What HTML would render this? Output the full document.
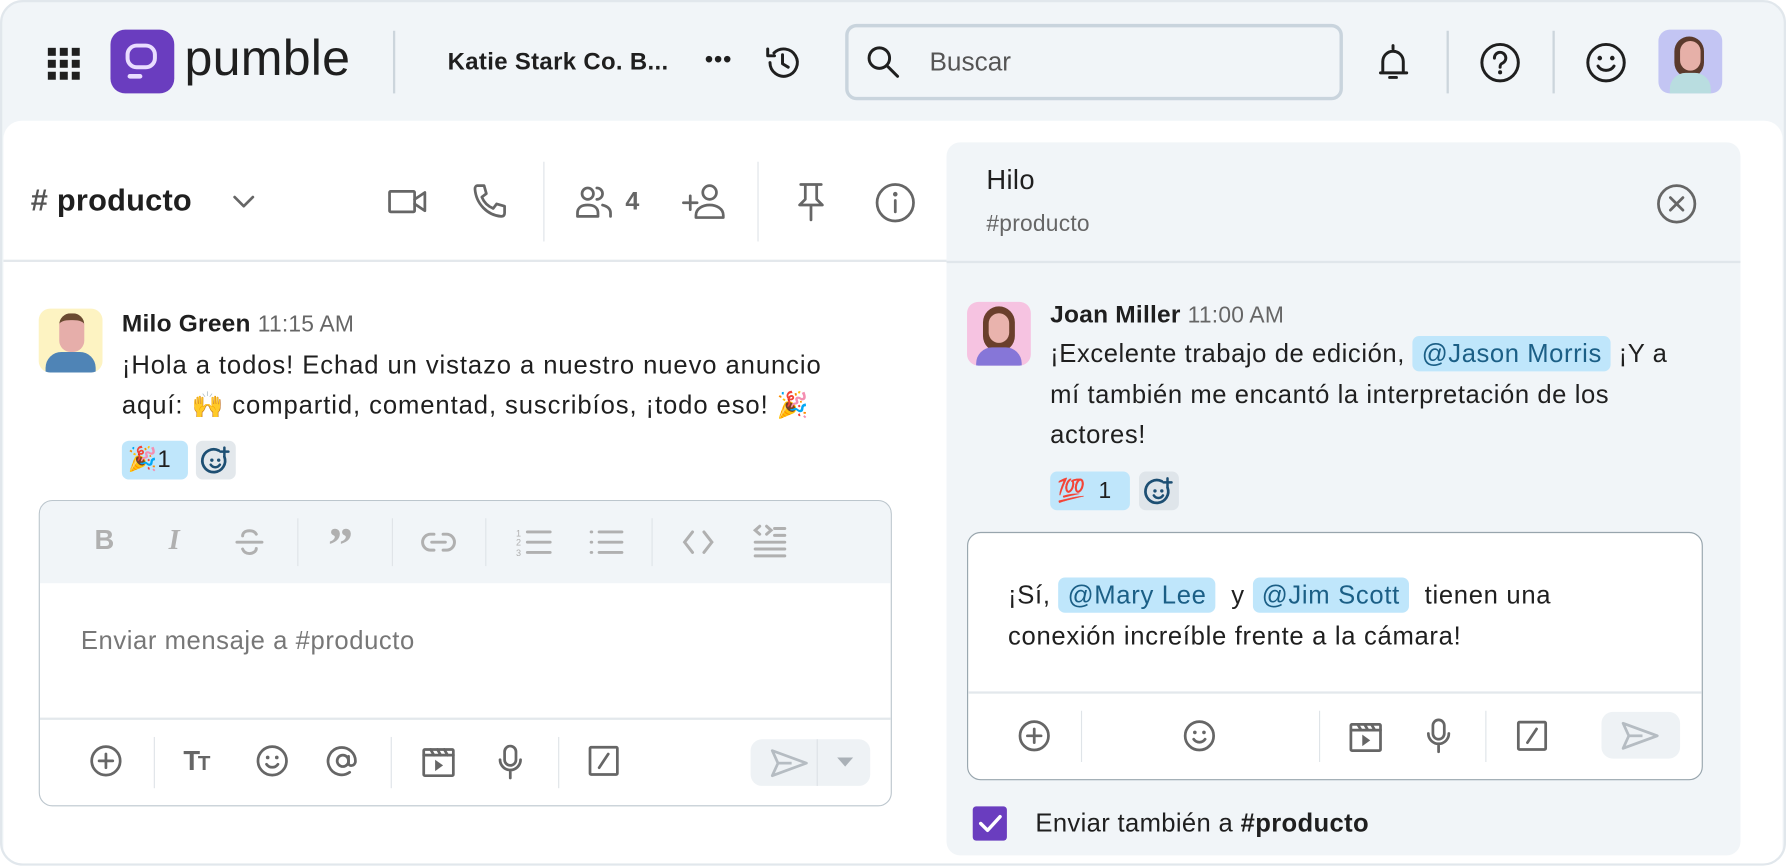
<!DOCTYPE html>
<html><head><meta charset="utf-8"><style>
*{box-sizing:border-box;margin:0;padding:0}
body{width:1786px;height:866px;overflow:hidden;background:#fff;font-family:"Liberation Sans","Noto Sans CJK JP",sans-serif;color:#1f1f1f}
#w{position:absolute;left:0;top:0;width:1568px;height:760px;transform:scale(1.13903);transform-origin:0 0;background:#f1f5f8;border:2px solid #e1e7ec;border-radius:20px;overflow:hidden}
.a{position:absolute;white-space:nowrap}
svg{position:absolute;overflow:visible}
.g{stroke:#666;fill:none;stroke-width:2.4;stroke-linecap:round;stroke-linejoin:round}
.k{stroke:#1f1f1f;fill:none;stroke-width:2.6;stroke-linecap:round;stroke-linejoin:round}
.t{stroke:#b0b0b0;fill:none;stroke-width:2.6;stroke-linecap:round}
.vd{position:absolute;width:1px;background:#dfe4e8}
.m{background:#bfe6fb;color:#1b5f86;border-radius:6px;padding:3px 8px}
.tx{font-size:22.5px;letter-spacing:0.8px}
</style></head><body><div id="w">
<svg style="left:40px;top:40px" width="28" height="28"><g fill="#1f1f1f"><rect x="0" y="0" width="7" height="7"/><rect x="10.5" y="0" width="7" height="7"/><rect x="21" y="0" width="7" height="7"/><rect x="0" y="10.5" width="7" height="7"/><rect x="10.5" y="10.5" width="7" height="7"/><rect x="21" y="10.5" width="7" height="7"/><rect x="0" y="21" width="7" height="7"/><rect x="10.5" y="21" width="7" height="7"/><rect x="21" y="21" width="7" height="7"/></g></svg>
<div class="a" style="left:95px;top:24px;width:56px;height:56px;background:#6a3dbf;border-radius:13px"></div>
<svg style="left:95px;top:24px" width="56" height="56"><rect x="15" y="14" width="24" height="19" rx="8" fill="none" stroke="#e9ddff" stroke-width="3.5"/><rect x="15" y="39" width="13" height="4" rx="2" fill="#e9ddff"/></svg>
<div class="a" style="left:160px;top:24px;font-size:44px;font-weight:500;letter-spacing:0.2px;line-height:52px">pumble</div>
<div class="a" style="left:343px;top:25px;width:2px;height:55px;background:#ccd5dc"></div>
<div class="a" style="left:391px;top:40px;font-size:21px;font-weight:700;line-height:26px;letter-spacing:0.3px">Katie Stark Co. B...</div>
<div class="a" style="left:617px;top:40px;font-size:20px;font-weight:700;letter-spacing:1px">•••</div>
<svg style="left:668px;top:36px" width="34" height="34"><path class="k" d="M6 17a12 12 0 1 0 3.5-8.5M4 5v6h6M17 10v8l5 3"/></svg>
<div class="a" style="left:740px;top:19px;width:437px;height:67px;border:3px solid #c9d4dd;border-radius:10px"></div>
<svg style="left:758px;top:37px" width="32" height="32"><circle class="k" cx="12" cy="12" r="9" stroke-width="3"/><path class="k" d="M19 19l9 9" stroke-width="3.4"/></svg>
<div class="a" style="left:814px;top:39px;font-size:23px;color:#555">Buscar</div>
<svg style="left:1207px;top:35px" width="28" height="36"><path class="k" d="M14 3v3M5 27V17a9 9 0 0 1 18 0v10H3M26 27h-3M11 31h6"/></svg>
<div class="a" style="left:1268px;top:25px;width:2px;height:55px;background:#ccd5dc"></div>
<svg style="left:1297px;top:35px" width="36" height="36"><circle class="k" cx="18" cy="18" r="16"/><path class="k" d="M13 14a5 5 0 1 1 7 4.5c-1.5.7-2 1.5-2 3.5"/><circle cx="18" cy="26.5" r="1.8" fill="#1f1f1f"/></svg>
<div class="a" style="left:1361px;top:25px;width:2px;height:55px;background:#ccd5dc"></div>
<svg style="left:1390px;top:35px" width="37" height="37"><circle class="k" cx="18" cy="18" r="16"/><circle cx="12.5" cy="14" r="2" fill="#1f1f1f"/><circle cx="23.5" cy="14" r="2" fill="#1f1f1f"/><path class="k" d="M11 21c3 5 11 5 14 0"/></svg>
<div class="a" style="left:1454px;top:24px;width:56px;height:56px;background:#c3c5f3;border-radius:10px;overflow:hidden"><div class="a" style="left:14px;top:6px;width:26px;height:36px;background:#5a3a2c;border-radius:13px"></div><div class="a" style="left:19px;top:10px;width:18px;height:26px;background:#e6b0a8;border-radius:9px"></div><div class="a" style="left:10px;top:38px;width:36px;height:22px;background:#b9dde0;border-radius:14px 14px 0 0"></div></div>
<div class="a" style="left:1px;top:104px;width:1562px;height:660px;background:#fff;border-radius:16px 16px 0 0"></div>
<div class="a" style="left:1px;top:226px;width:828px;height:2px;background:#e3e8ec"></div>
<div class="a" style="left:25px;top:159px;font-size:27px;font-weight:700;letter-spacing:0.2px"><span style="color:#555">#</span> producto</div>
<svg style="left:201px;top:168px" width="22" height="14"><path class="g" d="M3 3l8 8 8-8" stroke-width="2.6"/></svg>
<svg style="left:338px;top:163px" width="35" height="24"><rect class="g" x="2" y="3" width="22" height="18" rx="1" stroke-width="2.8"/><path class="g" d="M24 10l9-6v16l-9-6" stroke-width="2.8"/></svg>
<svg style="left:412px;top:158px" width="34" height="34"><path class="g" d="M5 3h6l2 7-4 3c2 5 5 8 10 10l3-4 7 2v6c0 2-1 3-3 3C14 29 4 19 3 6c0-2 1-3 2-3z" stroke-width="2.6"/></svg>
<div class="vd" style="left:475px;top:140px;height:70px"></div>
<svg style="left:503px;top:160px" width="38" height="30"><circle class="g" cx="11" cy="8" r="5" stroke-width="2.8"/><path class="g" d="M2 28v-3c0-5 4-7 9-7s9 2 9 7v3zM19 3a5 5 0 0 1 0 10M24 18c4 1 7 3 7 7v3" stroke-width="2.8"/></svg>
<div class="a" style="left:547px;top:162px;font-size:22px;color:#666;font-weight:600">4</div>
<svg style="left:597px;top:158px" width="40" height="34"><path class="g" d="M1 18h12M7 12v12" stroke-width="2.8"/><circle class="g" cx="24" cy="9" r="6" stroke-width="2.8"/><path class="g" d="M12 31v-2c0-6 6-9 12-9s12 3 12 9v2z" stroke-width="2.8"/></svg>
<div class="vd" style="left:663px;top:140px;height:70px"></div>
<svg style="left:697px;top:157px" width="26" height="36"><path class="g" d="M4 3h18M8 3v13l-5 5h20l-5-5V3M13 21v13" stroke-width="2.8"/></svg>
<svg style="left:766px;top:158px" width="36" height="36"><circle class="g" cx="18" cy="18" r="16" stroke-width="2.8"/><path class="g" d="M18 16v10" stroke-width="3.2"/><circle cx="18" cy="10.5" r="2" fill="#666"/></svg>
<div class="a" style="left:32px;top:269px;width:56px;height:56px;background:#fdf3c2;border-radius:10px;overflow:hidden"><div class="a" style="left:18px;top:4px;width:22px;height:34px;background:#e6aeaa;border-radius:10px;border-top:6px solid #6a4a30"></div><div class="a" style="left:6px;top:38px;width:44px;height:22px;background:#4f84b6;border-radius:14px 14px 0 0"></div></div>
<div class="a" style="left:105px;top:270px;font-size:21.5px;font-weight:700;letter-spacing:0.2px">Milo Green <span style="font-weight:400;color:#666;font-size:20px">11:15 AM</span></div>
<div class="a tx" style="left:105px;top:301px;line-height:35px">¡Hola a todos! Echad un vistazo a nuestro nuevo anuncio<br>aquí: 🙌 compartid, comentad, suscribíos, ¡todo eso! 🎉</div>
<div class="a" style="left:105px;top:385px;width:58px;height:34px;background:#bfe6fb;border-radius:6px;font-size:21px;line-height:34px;padding-left:5px">🎉1</div>
<div class="a" style="left:170px;top:385px;width:35px;height:34px;background:#e3e8ec;border-radius:6px"></div>
<svg style="left:175px;top:390px" width="26" height="26"><path d="M20 9a10 10 0 1 1-5-5.5" fill="none" stroke="#1d4f73" stroke-width="2.4" stroke-linecap="round"/><circle cx="9" cy="12" r="1.5" fill="#1d4f73"/><circle cx="15" cy="12" r="1.5" fill="#1d4f73"/><path d="M8 16c2 3 6 3 8 0M20 1v7M16.5 4.5h7" fill="none" stroke="#1d4f73" stroke-width="2.2" stroke-linecap="round"/></svg>
<div class="a" style="left:32px;top:437px;width:749px;height:269px;border:1.6px solid #bcc6cd;border-radius:12px;overflow:hidden"><div class="a" style="left:0;top:0;width:100%;height:72px;background:#f1f5f8"></div><div class="a" style="left:0;top:190px;width:100%;height:2px;background:#e3e8ec"></div></div>
<div class="a" style="left:81px;top:459px;font-size:24px;font-weight:700;color:#b0b0b0">B</div>
<div class="a" style="left:146px;top:459px;font-size:25px;font-weight:700;font-style:italic;color:#b0b0b0;font-family:'Liberation Serif',serif">I</div>
<svg style="left:204px;top:461px" width="26" height="26"><path class="t" d="M19 6c-1-2-3-3-6-3-4 0-6 2-6 4.5M2 13h22M7 19c1 2.5 3 4 6 4s6-2 6-4.5"/></svg>
<div class="vd" style="left:259px;top:453px;height:42px"></div>
<div class="a" style="left:286px;top:452px;font-size:44px;font-weight:700;color:#b0b0b0;font-family:'Liberation Serif',serif;line-height:50px">”</div>
<div class="vd" style="left:342px;top:453px;height:42px"></div>
<svg style="left:367px;top:464px" width="32" height="20"><path class="t" d="M12 3H9a7 7 0 0 0 0 14h3M20 3h3a7 7 0 0 1 0 14h-3M10 10h12"/></svg>
<div class="vd" style="left:424px;top:453px;height:42px"></div>
<svg style="left:451px;top:461px" width="32" height="26"><path class="t" d="M10 4h20M10 13h20M10 22h20"/><text x="0" y="8" font-size="8" fill="#b0b0b0">1</text><text x="0" y="16" font-size="8" fill="#b0b0b0">2</text><text x="0" y="25" font-size="8" fill="#b0b0b0">3</text></svg>
<svg style="left:514px;top:461px" width="32" height="26"><path class="t" d="M10 4h20M10 13h20M10 22h20M3 4h.5M3 13h.5M3 22h.5" stroke-width="3.4"/></svg>
<div class="vd" style="left:570px;top:453px;height:42px"></div>
<svg style="left:597px;top:463px" width="28" height="22"><path class="t" d="M9 2L2 11l7 9M19 2l7 9-7 9"/></svg>
<svg style="left:659px;top:458px" width="30" height="30"><path class="t" d="M6 2L2 5.5 6 9M12 2l4 3.5L12 9M19 4h9M19 10h9M2 16h26M2 22h26M2 28h26" stroke-width="2.4"/></svg>
<div class="a" style="left:69px;top:548px;color:#777;font-size:22.5px;letter-spacing:0.5px">Enviar mensaje a #producto</div>
<svg style="left:77px;top:652px" width="28" height="28"><circle class="g" cx="14" cy="14" r="12.5"/><path class="g" d="M14 8v12M8 14h12"/></svg>
<div class="vd" style="left:133px;top:645px;height:45px"></div>
<div class="a" style="left:159px;top:653px;font-size:24px;font-weight:700;color:#666;letter-spacing:-2px">T<span style="font-size:18px">T</span></div>
<svg style="left:223px;top:652px" width="28" height="28"><circle class="g" cx="14" cy="14" r="12.5"/><circle cx="10" cy="11" r="1.6" fill="#666"/><circle cx="18" cy="11" r="1.6" fill="#666"/><path class="g" d="M9 17c2.5 3.5 7.5 3.5 10 0"/></svg>
<svg style="left:285px;top:652px" width="28" height="28"><circle class="g" cx="14" cy="14" r="5"/><path class="g" d="M19 10v6c0 3 5 3 6-1a12 12 0 1 0-5 9"/></svg>
<div class="vd" style="left:341px;top:645px;height:45px"></div>
<svg style="left:368px;top:651px" width="30" height="30"><rect class="g" x="2" y="5" width="26" height="23" rx="1"/><path class="g" d="M2 10h26M8 5l3 5M14 5l3 5M20 5l3 5"/><path d="M12 14v10l7-5z" fill="#666"/></svg>
<svg style="left:434px;top:651px" width="24" height="32"><rect class="g" x="7" y="2" width="10" height="17" rx="5"/><path class="g" d="M3 14a9 9 0 0 0 18 0M12 23v7"/></svg>
<div class="vd" style="left:488px;top:645px;height:45px"></div>
<svg style="left:514px;top:652px" width="28" height="28"><rect class="g" x="2" y="2" width="24" height="24" rx="1"/><path class="g" d="M18 8l-8 12"/></svg>
<div class="a" style="left:657px;top:647px;width:105px;height:41px;background:#eef2f5;border-radius:10px"></div>
<div class="a" style="left:715px;top:647px;width:1px;height:41px;background:#dde2e6"></div>
<svg style="left:674px;top:655px" width="34" height="26"><path d="M2 2l30 11L2 24l5-11z" fill="none" stroke="#b5bcc2" stroke-width="2.4" stroke-linejoin="round"/><path d="M7 13h12" stroke="#b5bcc2" stroke-width="2.4"/></svg>
<svg style="left:733px;top:663px" width="14" height="9"><path d="M0 0h14L7 8z" fill="#aab1b7"/></svg>
<div class="a" style="left:829px;top:123px;width:697px;height:626px;background:#f1f5f8;border-radius:12px"></div>
<div class="a" style="left:829px;top:227px;width:697px;height:2px;background:#e0e6eb"></div>
<div class="a" style="left:864px;top:143px;font-size:24px;font-weight:500;letter-spacing:0.3px">Hilo</div>
<div class="a" style="left:864px;top:184px;font-size:20px;color:#666;letter-spacing:0.2px">#producto</div>
<svg style="left:1452px;top:159px" width="36" height="36"><circle class="g" cx="18" cy="18" r="16" stroke-width="2.8"/><path class="g" d="M12.5 12.5l11 11M23.5 12.5l-11 11" stroke-width="3"/></svg>
<div class="a" style="left:847px;top:263px;width:56px;height:56px;background:#f6c3e1;border-radius:10px;overflow:hidden"><div class="a" style="left:14px;top:4px;width:28px;height:40px;background:#6a3f2c;border-radius:14px"></div><div class="a" style="left:19px;top:10px;width:18px;height:26px;background:#e9b3ad;border-radius:9px"></div><div class="a" style="left:8px;top:40px;width:40px;height:22px;background:#8676d8;border-radius:14px 14px 0 0"></div></div>
<div class="a" style="left:920px;top:262px;font-size:21.5px;font-weight:700;letter-spacing:0.2px">Joan Miller <span style="font-weight:400;color:#666;font-size:20px">11:00 AM</span></div>
<div class="a tx" style="left:920px;top:291px;line-height:35.5px;letter-spacing:0.5px">¡Excelente trabajo de edición, <span class="m">@Jason Morris</span> ¡Y a<br>mí también me encantó la interpretación de los<br>actores!</div>
<div class="a" style="left:920px;top:412px;width:70px;height:34px;background:#bfe6fb;border-radius:6px;font-size:20px;line-height:34px;padding-left:6px">💯 <span style="margin-left:6px">1</span></div>
<div class="a" style="left:998px;top:412px;width:35px;height:34px;background:#dfe5ea;border-radius:6px"></div>
<svg style="left:1003px;top:417px" width="26" height="26"><path d="M20 9a10 10 0 1 1-5-5.5" fill="none" stroke="#1d4f73" stroke-width="2.4" stroke-linecap="round"/><circle cx="9" cy="12" r="1.5" fill="#1d4f73"/><circle cx="15" cy="12" r="1.5" fill="#1d4f73"/><path d="M8 16c2 3 6 3 8 0M20 1v7M16.5 4.5h7" fill="none" stroke="#1d4f73" stroke-width="2.2" stroke-linecap="round"/></svg>
<div class="a" style="left:847px;top:465px;width:646px;height:218px;background:#fff;border:1.6px solid #98a5ad;border-radius:12px;overflow:hidden"><div class="a" style="left:0;top:139px;width:100%;height:2px;background:#e3e8ec"></div></div>
<div class="a tx" style="left:883px;top:503px;line-height:36px;letter-spacing:0.6px">¡Sí, <span class="m">@Mary Lee</span> &nbsp;y <span class="m">@Jim Scott</span> &nbsp;tienen una<br>conexión increíble frente a la cámara!</div>
<svg style="left:892px;top:630px" width="28" height="28"><circle class="g" cx="14" cy="14" r="12.5"/><path class="g" d="M14 8v12M8 14h12"/></svg>
<div class="vd" style="left:947px;top:622px;height:45px"></div>
<svg style="left:1037px;top:630px" width="28" height="28"><circle class="g" cx="14" cy="14" r="12.5"/><circle cx="10" cy="11" r="1.6" fill="#666"/><circle cx="18" cy="11" r="1.6" fill="#666"/><path class="g" d="M9 17c2.5 3.5 7.5 3.5 10 0"/></svg>
<div class="vd" style="left:1156px;top:622px;height:45px"></div>
<svg style="left:1182px;top:629px" width="30" height="30"><rect class="g" x="2" y="5" width="26" height="23" rx="1"/><path class="g" d="M2 10h26M8 5l3 5M14 5l3 5M20 5l3 5"/><path d="M12 14v10l7-5z" fill="#666"/></svg>
<svg style="left:1249px;top:628px" width="24" height="32"><rect class="g" x="7" y="2" width="10" height="17" rx="5"/><path class="g" d="M3 14a9 9 0 0 0 18 0M12 23v7"/></svg>
<div class="vd" style="left:1302px;top:622px;height:45px"></div>
<svg style="left:1329px;top:630px" width="28" height="28"><rect class="g" x="2" y="2" width="24" height="24" rx="1"/><path class="g" d="M18 8l-8 12"/></svg>
<div class="a" style="left:1404px;top:623px;width:69px;height:41px;background:#eef2f5;border-radius:10px"></div>
<svg style="left:1421px;top:631px" width="34" height="26"><path d="M2 2l30 11L2 24l5-11z" fill="none" stroke="#b5bcc2" stroke-width="2.4" stroke-linejoin="round"/><path d="M7 13h12" stroke="#b5bcc2" stroke-width="2.4"/></svg>
<div class="a" style="left:852px;top:706px;width:30px;height:30px;background:#6a3dbf;border-radius:3px"></div>
<svg style="left:852px;top:706px" width="30" height="30"><path d="M7 15l6 6 11-12" fill="none" stroke="#fff" stroke-width="3" stroke-linecap="round" stroke-linejoin="round"/></svg>
<div class="a" style="left:907px;top:708px;font-size:22.5px;letter-spacing:0.3px">Enviar también a <b>#producto</b></div>
</div></body></html>
